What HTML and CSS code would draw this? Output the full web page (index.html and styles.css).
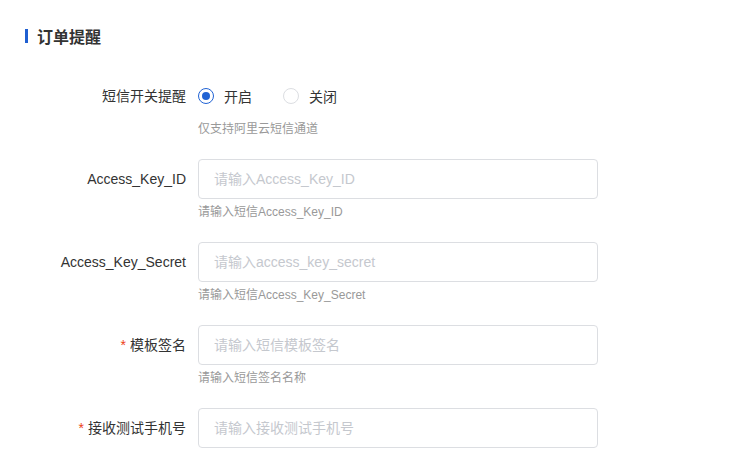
FILE: index.html
```html
<!DOCTYPE html>
<html lang="zh-CN">
<head>
  <meta charset="UTF-8" />
  <title>订单提醒</title>
  <link rel="stylesheet" href="styles.css">
</head>
<body>
  <div class="panel">
    <!-- Section title -->
    <div class="section-title"><span class="bar"></span>订单提醒</div>

    <div class="form">
      <div class="form-item">
        <label class="item-label">短信开关提醒</label>
        <div class="item-content">
          <div class="radio-group">
            <label class="radio checked"><span class="radio-inner"></span>开启</label>
            <label class="radio"><span class="radio-inner"></span>关闭</label>
          </div>
          <div class="hint">仅支持阿里云短信通道</div>
        </div>
      </div>

      <div class="form-item">
        <label class="item-label">Access_Key_ID</label>
        <div class="item-content">
          <input class="input" type="text" placeholder="请输入Access_Key_ID">
          <div class="hint">请输入短信Access_Key_ID</div>
        </div>
      </div>

      <div class="form-item">
        <label class="item-label">Access_Key_Secret</label>
        <div class="item-content">
          <input class="input" type="text" placeholder="请输入access_key_secret">
          <div class="hint">请输入短信Access_Key_Secret</div>
        </div>
      </div>

      <div class="form-item">
        <label class="item-label required">模板签名</label>
        <div class="item-content">
          <input class="input" type="text" placeholder="请输入短信模板签名">
          <div class="hint">请输入短信签名名称</div>
        </div>
      </div>

      <div class="form-item">
        <label class="item-label required">接收测试手机号</label>
        <div class="item-content">
          <input class="input" type="text" placeholder="请输入接收测试手机号">
        </div>
      </div>
    </div>
  </div>
</body>
</html>
```

FILE: styles.css
```css
html, body {
  margin: 0;
  padding: 0;
  background: #fff;
  font-family: "Liberation Sans", "Noto Sans CJK SC", sans-serif;
  color: #333;
  overflow: hidden;
}
.panel {
  padding: 26px 0 0 25px;
}
/* Title with blue marker */
.section-title {
  display: flex;
  align-items: center;
  height: 20px;
  font-size: 16px;
  font-weight: bold;
  color: #333;
  margin-bottom: 30px;
}
.section-title .bar {
  width: 3px;
  height: 14px;
  background: #1f5fd1;
  margin-right: 9px;
}
.form-item {
  display: flex;
  margin-bottom: 20px;
}
.item-label {
  width: 161px;
  padding-right: 12px;
  text-align: right;
  font-size: 14px;
  line-height: 40px;
  color: #333;
}
.item-label.required::before {
  content: "*";
  color: #ed4014;
  margin-right: 4px;
}
.item-content {
  display: flex;
  flex-direction: column;
}
.radio-group {
  display: flex;
  height: 40px;
  align-items: center;
}
.radio {
  display: flex;
  align-items: center;
  font-size: 14px;
  color: #333;
  margin-right: 31px;
}
.radio-inner {
  box-sizing: border-box;
  width: 16px;
  height: 16px;
  border: 1px solid #dcdee2;
  border-radius: 50%;
  margin-right: 10px;
  position: relative;
}
.radio.checked .radio-inner {
  border-color: #2163d4;
}
.radio.checked .radio-inner::after {
  content: "";
  position: absolute;
  left: 3px;
  top: 3px;
  width: 8px;
  height: 8px;
  border-radius: 50%;
  background: #2163d4;
}
.input {
  box-sizing: border-box;
  width: 400px;
  height: 40px;
  padding: 0 15px;
  border: 1px solid #dcdee2;
  border-radius: 4px;
  font-family: inherit;
  font-size: 14px;
  color: #333;
  outline: none;
}
.input::placeholder {
  color: #c5c8ce;
}
.hint {
  font-size: 12px;
  line-height: 20px;
  padding-top: 3px;
  color: #999;
}
```
